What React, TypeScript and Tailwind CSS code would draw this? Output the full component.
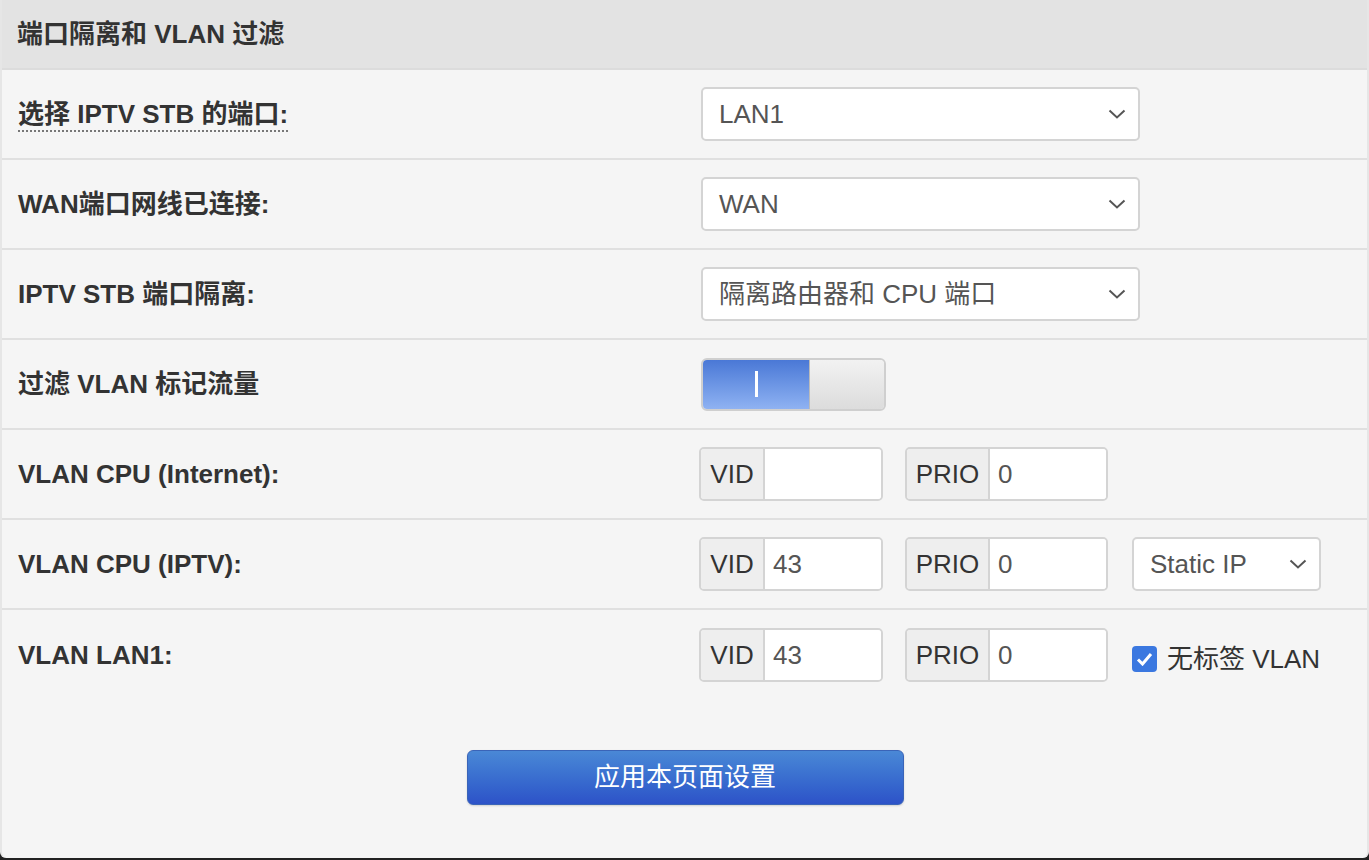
import React from 'react';

const font = { fontFamily: '"Liberation Sans", Arial, "Noto Sans CJK SC", sans-serif' };

const Chevron = () => (
  <svg width="18" height="10" viewBox="0 0 18 10" className="shrink-0">
    <path d="M1.5 1.5 L9 8.5 L16.5 1.5" fill="none" stroke="#555" strokeWidth="2" />
  </svg>
);

const Select = ({ value, className }: { value: string; className: string }) => (
  <div
    className={`flex items-center justify-between bg-white border-2 border-[#d4d4d4] rounded-[5px] pl-[16px] pr-[12px] h-[54px] text-[26px] text-[#555] ${className}`}
  >
    <span>{value}</span>
    <Chevron />
  </div>
);

const InputGroup = ({ addon, value, addonW, inputW }: { addon: string; value: string; addonW: string; inputW: string }) => (
  <div className="flex h-[54px] border-2 border-[#d4d4d4] rounded-[5px] overflow-hidden text-[26px]">
    <div className={`flex items-center justify-center bg-[#eeeeee] text-[#333] border-r-2 border-[#d4d4d4] ${addonW}`}>
      {addon}
    </div>
    <div className={`flex items-center bg-white text-[#555] pl-[8px] ${inputW}`}>{value}</div>
  </div>
);

const Row = ({ label, children, dotted, last }: { label: string; children: React.ReactNode; dotted?: boolean; last?: boolean }) => (
  <div className={`flex items-center h-[90px] ${last ? '' : 'border-b-2 border-[#e0e0e0]'}`}>
    <div className="w-[699px] pl-[16px] shrink-0 text-[26px] font-bold text-[#333]">
      <span className={dotted ? 'border-b-2 border-dotted border-[#777] pb-[1px]' : ''}>{label}</span>
    </div>
    <div className="flex items-center">{children}</div>
  </div>
);

export default function App() {
  return (
    <div className="w-[1369px] h-[860px] bg-[#222]" style={font}>
      <div className="h-[858px] bg-[#f5f5f5] border-x-2 border-[#e6e6e6] rounded-b-[6px] flex flex-col">
        <div className="h-[70px] bg-[#e3e3e3] border-b-2 border-[#dcdcdc] flex items-center pl-[15px] text-[26px] font-bold text-[#333]">
          端口隔离和 VLAN 过滤
        </div>
        <Row label="选择 IPTV STB 的端口:" dotted>
          <Select value="LAN1" className="w-[439px]" />
        </Row>
        <Row label="WAN端口网线已连接:">
          <Select value="WAN" className="w-[439px]" />
        </Row>
        <Row label="IPTV STB 端口隔离:">
          <Select value="隔离路由器和 CPU 端口" className="w-[439px]" />
        </Row>
        <Row label="过滤 VLAN 标记流量">
          <div className="flex h-[53px] w-[185px] border-2 border-[#cfcfcf] rounded-[6px] overflow-hidden">
            <div className="w-[106px] flex items-center justify-center bg-gradient-to-b from-[#4a78d6] to-[#8fb2f2]">
              <div className="w-[3px] h-[26px] bg-white" />
            </div>
            <div className="flex-1 border-l border-[#bbb] bg-gradient-to-b from-[#f2f2f2] to-[#dcdcdc]" />
          </div>
        </Row>
        <Row label="VLAN CPU (Internet):">
          <div className="flex items-center gap-[22px] -ml-[2px]">
            <InputGroup addon="VID" value="" addonW="w-[64px]" inputW="w-[116px]" />
            <InputGroup addon="PRIO" value="0" addonW="w-[83px]" inputW="w-[116px]" />
          </div>
        </Row>
        <Row label="VLAN CPU (IPTV):">
          <div className="flex items-center gap-[22px] -ml-[2px]">
            <InputGroup addon="VID" value="43" addonW="w-[64px]" inputW="w-[116px]" />
            <InputGroup addon="PRIO" value="0" addonW="w-[83px]" inputW="w-[116px]" />
            <Select value="Static IP" className="ml-[2px] w-[189px]" />
          </div>
        </Row>
        <Row label="VLAN LAN1:" last>
          <div className="flex items-center gap-[22px] -ml-[2px]">
            <InputGroup addon="VID" value="43" addonW="w-[64px]" inputW="w-[116px]" />
            <InputGroup addon="PRIO" value="0" addonW="w-[83px]" inputW="w-[116px]" />
            <div className="flex items-center ml-[2px] mt-[8px] text-[26px] text-[#333]">
              <div className="w-[25px] h-[26px] rounded-[4px] bg-[#3b78e0] flex items-center justify-center">
                <svg width="17" height="14" viewBox="0 0 17 14">
                  <path d="M2 7.5 L6.5 12 L15 2" fill="none" stroke="white" strokeWidth="3" />
                </svg>
              </div>
              <span className="ml-[10px]">无标签 VLAN</span>
            </div>
          </div>
        </Row>
        <div className="flex justify-center pt-[50px] pl-[1px]">
          <button className="w-[437px] h-[55px] rounded-[6px] border border-[#3a64b8] bg-gradient-to-b from-[#4a88d6] to-[#2d52c8] text-white text-[26px] shadow-[0_1px_2px_rgba(0,0,0,0.15)]">
            应用本页面设置
          </button>
        </div>
      </div>
    </div>
  );
}
